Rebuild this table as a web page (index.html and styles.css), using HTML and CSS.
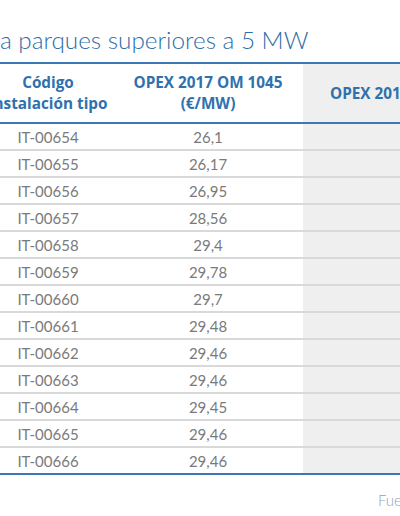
FILE: index.html
```html
<!DOCTYPE html>
<html lang="es">
<head>
<meta charset="utf-8">
<link rel="stylesheet" href="styles.css">
</head>
<body>
<div class="page">
  <h1 class="title">a parques superiores a 5 MW</h1>
  <table class="data">
    <colgroup>
      <col class="c1"><col class="c2"><col class="c3">
    </colgroup>
    <thead>
      <tr>
        <th>Código<br>Instalación tipo</th>
        <th>OPEX 2017 OM 1045<br>(€/MW)</th>
        <th class="grey">OPEX 2017 OM 1046 (€/MW)</th>
      </tr>
    </thead>
    <tbody>
      <tr><td>IT-00654</td><td>26,1</td><td class="grey"></td></tr>
      <tr><td>IT-00655</td><td>26,17</td><td class="grey"></td></tr>
      <tr><td>IT-00656</td><td>26,95</td><td class="grey"></td></tr>
      <tr><td>IT-00657</td><td>28,56</td><td class="grey"></td></tr>
      <tr><td>IT-00658</td><td>29,4</td><td class="grey"></td></tr>
      <tr><td>IT-00659</td><td>29,78</td><td class="grey"></td></tr>
      <tr><td>IT-00660</td><td>29,7</td><td class="grey"></td></tr>
      <tr><td>IT-00661</td><td>29,48</td><td class="grey"></td></tr>
      <tr><td>IT-00662</td><td>29,46</td><td class="grey"></td></tr>
      <tr><td>IT-00663</td><td>29,46</td><td class="grey"></td></tr>
      <tr><td>IT-00664</td><td>29,45</td><td class="grey"></td></tr>
      <tr><td>IT-00665</td><td>29,46</td><td class="grey"></td></tr>
      <tr><td>IT-00666</td><td>29,46</td><td class="grey"></td></tr>
    </tbody>
  </table>
  <div class="source">Fuente</div>
</div>
</body>
</html>
```

FILE: styles.css
```css
html, body {
  margin: 0;
  padding: 0;
  background: #ffffff;
}
.page {
  width: 400px;
  height: 516px;
  overflow: hidden;
  font-family: Lato, "Open Sans", sans-serif;
}
.title {
  margin: 0;
  padding: 26px 0 0 0;
  height: 36px;
  font-size: 24.3px;
  font-weight: 300;
  line-height: 28px;
  color: #2e6ea7;
  white-space: nowrap;
}
.data {
  margin-left: -17px;
  border-collapse: collapse;
  table-layout: fixed;
  width: 640px;
}
.c1 { width: 130px; }
.c2 { width: 190px; }
.c3 { width: 320px; }
.data thead th {
  height: 58px;
  padding: 0;
  border-top: 2px solid #3b78b4;
  border-bottom: 2px solid #3b78b4;
  font-family: "Open Sans", sans-serif;
  font-weight: 700;
  font-size: 15.3px;
  line-height: 21px;
  color: #2f71ad;
  text-align: center;
  vertical-align: middle;
  white-space: nowrap;
}
.data thead th.grey {
  text-align: left;
  padding-left: 27px;
}
.data td {
  height: 25px;
  padding: 0;
  border-bottom: 2px solid #d9d9d9;
  font-size: 15px;
  font-weight: 400;
  color: #7a7a7a;
  text-align: center;
  vertical-align: middle;
  white-space: nowrap;
}
.data tbody tr:last-child td {
  border-bottom: 2px solid #3b78b4;
}
.grey {
  background: #efefef;
}
.source {
  padding: 16px 0 0 378px;
  font-size: 15px;
  font-weight: 300;
  color: #8ea5bd;
  white-space: nowrap;
}
```
